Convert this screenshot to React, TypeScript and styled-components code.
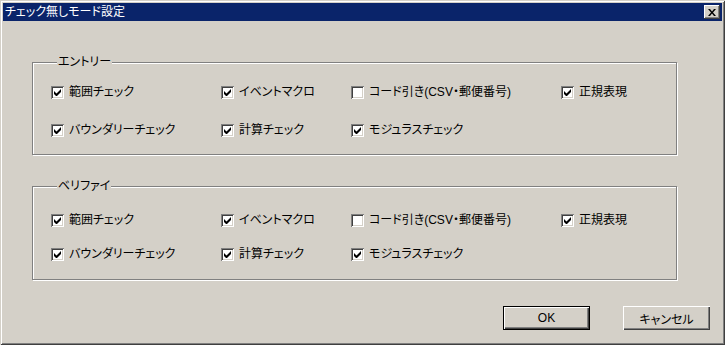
import React from "react";
import styled, { createGlobalStyle } from "styled-components";

const Global = createGlobalStyle`
  html, body { margin: 0; padding: 0; background: #d4d0c8; }
  body { font-family: "Liberation Sans", "Noto Sans CJK JP", sans-serif; font-size: 12px; }
`;

const Frame = styled.div`
  width: 725px;
  height: 345px;
  box-sizing: border-box;
  background: #d4d0c8;
  padding: 3px;
  display: flex;
  flex-direction: column;
  box-shadow: inset 1px 1px 0 #d4d0c8, inset -1px -1px 0 #404040,
    inset 2px 2px 0 #ffffff, inset -2px -2px 0 #808080;
  color: #000;
  font-feature-settings: "palt";
`;

const TitleBar = styled.div`
  height: 18px;
  background: #0a246a;
  color: #fff;
  display: flex;
  align-items: center;
  justify-content: space-between;
  padding: 0 2px 0 2px;
  font-size: 12px;
  line-height: 18px;
`;

const CloseButton = styled.div`
  width: 16px;
  height: 14px;
  box-sizing: border-box;
  background: #d4d0c8;
  display: flex;
  align-items: center;
  justify-content: center;
  box-shadow: inset -1px -1px 0 #404040, inset 1px 1px 0 #ffffff,
    inset -2px -2px 0 #808080;
`;

const Content = styled.div`
  flex: 1;
  display: flex;
  flex-direction: column;
  padding: 34px 45px 0 29px;
`;

const Group = styled.fieldset<{ $pt: number; $gap: number; $pb: number }>`
  margin: 0;
  padding: ${(p) => p.$pt}px 0 ${(p) => p.$pb}px 18px;
  border: 1px solid #808080;
  box-shadow: inset 1px 1px 0 #ffffff, 1px 1px 0 #ffffff;
  display: grid;
  grid-template-columns: 170px 130px 210px 1fr;
  grid-auto-rows: 16px;
  row-gap: ${(p) => p.$gap}px;
  & + & {
    margin-top: 24px;
  }
`;

const Legend = styled.legend`
  margin-left: 6px;
  padding: 0 1px;
  background: #d4d0c8;
  line-height: 14px;
  font-size: 12px;
`;

const Item = styled.label`
  display: flex;
  align-items: center;
  gap: 5px;
  white-space: nowrap;
  line-height: 16px;
`;

const Box = styled.span`
  width: 13px;
  height: 13px;
  box-sizing: border-box;
  background: #fff;
  flex: none;
  display: flex;
  align-items: center;
  justify-content: center;
  box-shadow: inset 1px 1px 0 #808080, inset -1px -1px 0 #ffffff,
    inset 2px 2px 0 #404040, inset -2px -2px 0 #d4d0c8;
`;

const Footer = styled.div`
  margin-top: auto;
  display: flex;
  justify-content: flex-end;
  gap: 33px;
  padding: 0 12px 12px 0;
`;

const Button = styled.div<{ $default?: boolean }>`
  width: 87px;
  height: 24px;
  box-sizing: border-box;
  display: flex;
  align-items: center;
  justify-content: center;
  background: #d4d0c8;
  font-size: 12px;
  border: ${(p) => (p.$default ? "1px solid #000" : "none")};
  box-shadow: inset 1px 1px 0 #ffffff, inset -1px -1px 0 #404040,
    inset -2px -2px 0 #808080;
`;

const Check = () => (
  <svg width="7" height="7" viewBox="0 0 7 7">
    <path d="M0 2v3l2 2h1l4-4V0L2.5 4.5z" fill="#000" />
  </svg>
);

type Opt = { label: string; checked: boolean };

const rows: Opt[] = [
  { label: "範囲チェック", checked: true },
  { label: "イベントマクロ", checked: true },
  { label: "コード引き(CSV・郵便番号)", checked: false },
  { label: "正規表現", checked: true },
  { label: "バウンダリーチェック", checked: true },
  { label: "計算チェック", checked: true },
  { label: "モジュラスチェック", checked: true },
];

const Options = () => (
  <>
    {rows.map((o) => (
      <Item key={o.label}>
        <Box>{o.checked && <Check />}</Box>
        {o.label}
      </Item>
    ))}
  </>
);

export default function App() {
  return (
    <>
      <Global />
      <Frame>
        <TitleBar>
          <span>チェック無しモード設定</span>
          <CloseButton>
            <svg width="8" height="7" viewBox="0 0 8 7">
              <path d="M0 0h2l2 2.5L6 0h2L5 3.5 8 7H6L4 4.5 2 7H0l3-3.5z" fill="#000" />
            </svg>
          </CloseButton>
        </TitleBar>
        <Content>
          <Group $pt={15} $gap={22} $pb={16}>
            <Legend>エントリー</Legend>
            <Options />
          </Group>
          <Group $pt={19} $gap={18} $pb={17}>
            <Legend>ベリファイ</Legend>
            <Options />
          </Group>
        </Content>
        <Footer>
          <Button $default>OK</Button>
          <Button>キャンセル</Button>
        </Footer>
      </Frame>
    </>
  );
}
